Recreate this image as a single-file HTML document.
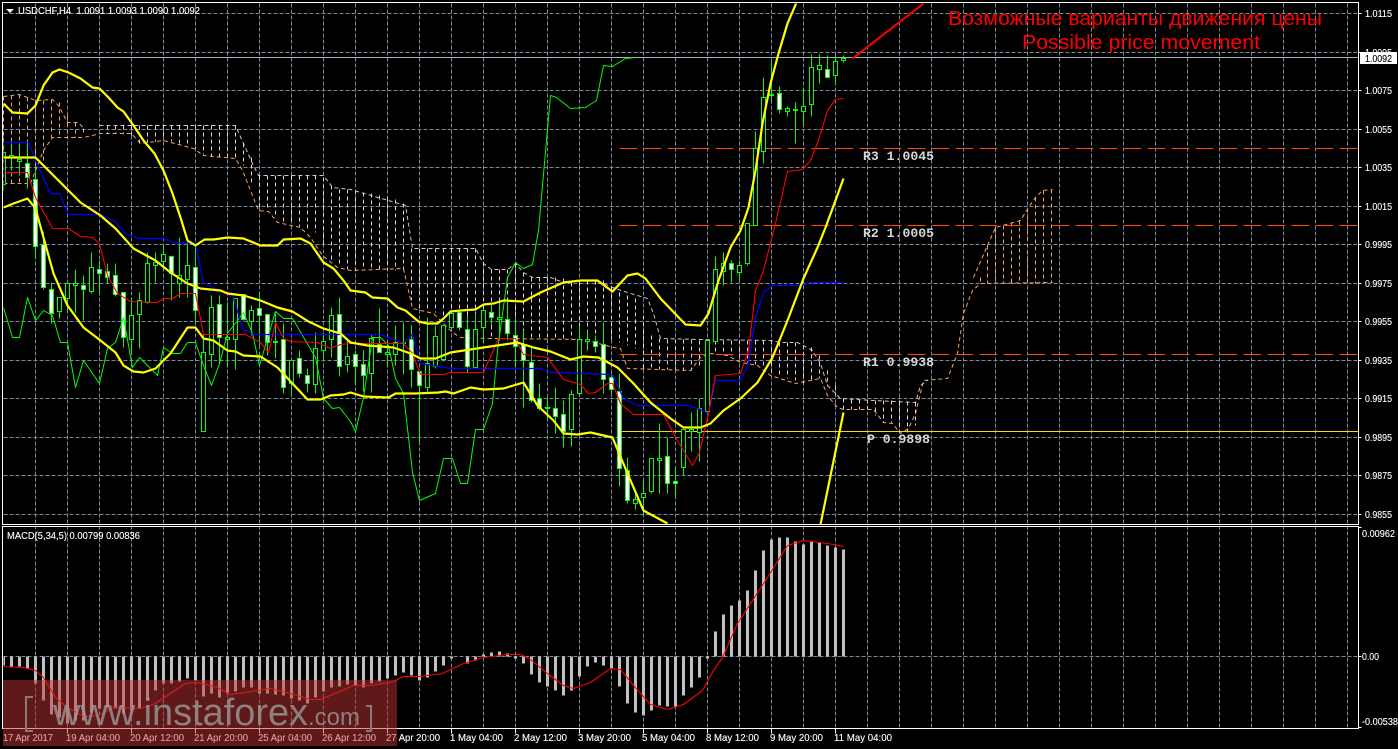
<!DOCTYPE html>
<html>
<head>
<meta charset="utf-8">
<style>
html,body{margin:0;padding:0;background:#000;width:1398px;height:749px;overflow:hidden}
svg{display:block}
text{font-family:"Liberation Sans","Noto Sans CJK SC",sans-serif;font-size:10.5px;fill:#fff;stroke:#fff;stroke-width:.12}
.m{font-family:"Liberation Mono",monospace;font-size:13px;font-weight:bold;fill:#d8d8d8;stroke:none}
.r{font-size:20px;fill:#f00;stroke:none}
.w{fill:#9a9a9a;stroke:none}
</style>
</head>
<body>
<svg width="1398" height="749" viewBox="0 0 1398 749" xmlns="http://www.w3.org/2000/svg">
<rect width="1398" height="749" fill="#000"/>
<defs><clipPath id="c"><rect x="3" y="3" width="1355" height="521"/></clipPath><clipPath id="d"><rect x="3" y="527" width="1355" height="201"/></clipPath></defs>
<g transform="translate(.5 .5)">
<!-- grid -->
<path shape-rendering="crispEdges" fill="none" stroke="#778899" stroke-width="1" stroke-dasharray="4 2" d="M35 3V728M67 3V728M99 3V728M131 3V728M163 3V728M195 3V728M227 3V728M259 3V728M291 3V728M323 3V728M355 3V728M387 3V728M419 3V728M451 3V728M483 3V728M515 3V728M547 3V728M579 3V728M611 3V728M643 3V728M675 3V728M707 3V728M739 3V728M771 3V728M803 3V728M835 3V728M867 3V728M899 3V728M931 3V728M963 3V728M995 3V728M1027 3V728M1059 3V728M1091 3V728M1123 3V728M1155 3V728M1187 3V728M1219 3V728M1251 3V728M1283 3V728M1315 3V728M1347 3V728"/>
<path shape-rendering="crispEdges" fill="none" stroke="#778899" stroke-width="1" stroke-dasharray="4 2" d="M3 13H1358M3 52H1358M3 90H1358M3 129H1358M3 167H1358M3 206H1358M3 244H1358M3 283H1358M3 321H1358M3 360H1358M3 398H1358M3 437H1358M3 475H1358M3 514H1358M3 656H1358"/>
<!-- current price -->
<path shape-rendering="crispEdges" stroke="#a9b2bb" d="M3 57H1358"/>
<!-- cloud -->
<g fill="none" stroke-width="1" stroke-dasharray="4 3" shape-rendering="crispEdges">
<path stroke="#f4a460" d="M3 96V183M11 95V183M19 94V183M27 97V183M35 100V178M43 100V160M51 99V137M59 102V137M67 115V137M75 122V137M83 128V135"/>
<path stroke="#f4a460" shape-rendering="auto" d="M3 96L19 94L27 97L35 100L52 99L58 105L67 122L78 122L83 128M3 183H27M30 183L43 150L52 137H83L100 133H131L140 143L163 140L193 148L203 155L235 158L242 170L258 210L268 211L277 222L300 227L310 237L322 255L337 267L350 270L403 268L412 308L433 313L452 332L460 337L493 338L583 339L613 347L620 348L627 368L690 370L700 357L710 353L727 355L740 362L757 365L770 375L795 383L820 378L827 395L837 407L843 409L873 409L883 422L892 423L900 433L908 428L915 413L923 380L947 378L957 353L963 313L972 290L980 283L1052 282"/>
<path stroke="#d8bfd8" shape-rendering="auto" d="M99 125H235L243 143L252 163L258 175H323L332 187L350 189L405 205L412 248H475L483 263L491 269H507L515 263L523 272L532 277H550L563 282L580 280H597L612 287L627 292L647 298L653 313L660 338L700 339L770 340L780 342H797L812 350L820 363L827 385L840 398L873 400L915 402L920 385L927 380"/>
<path stroke="#f4a460" shape-rendering="auto" d="M973 277L987 245L995 227L1020 220L1028 207L1035 197L1042 190L1052 189"/>
<path stroke="#e6d2c8" d="M107 125V133M115 125V133M123 125V133M131 125V135M139 125V143M147 125V142M155 125V141M163 125V140M171 125V141M179 125V144M187 125V147M195 125V148M203 125V154M211 125V156M219 125V157M227 125V157M235 125V158M243 143V165M251 157V183M259 175V208M267 175V210M275 175V216M283 175V221M291 175V224M299 175V226M307 175V228M315 175V232M323 177V245M331 185V261M339 189V266M347 189V269M355 190V270M363 192V270M371 193V270M379 195V270M387 197V270M395 199V270M403 203V269M411 248V300M419 248V310M427 248V312M435 248V312M443 248V316M451 248V325M459 248V332M467 248V336M475 248V337M483 255V338M491 269V338M499 269V338M507 269V338M515 263V338M523 272V338M531 277V338M539 277V338M547 277V339M555 277V339M563 278V339M571 282V339M579 281V339M587 280V339M595 280V339M603 280V339M611 287V339M619 292V342M627 295V345M635 298V348M643 315V368M651 335V369M659 338V369M667 339V369M675 339V369M683 339V370M691 339V370M699 340V365M707 340V354M715 340V353M723 340V354M731 340V355M739 340V357M747 340V362M755 340V364M763 340V366M771 340V373M779 342V376M787 342V378M795 342V380M803 345V383M811 347V380M819 355V378M827 370V385M835 385V395M843 398V409M851 399V409M859 399V409M867 399V409M875 400V415M883 400V422M891 400V422M899 401V431M907 401V432M915 402V425"/>
<path stroke="#f4a460" d="M980 277V283M987 245V283M995 227V283M1003 225V283M1011 222V283M1019 220V283M1027 208V283M1035 197V283M1043 190V282M1051 189V282"/>
</g>
<!-- pivots -->
<g shape-rendering="crispEdges" fill="none">
<path stroke="#ff4500" stroke-dasharray="18 6" d="M619 148H1358M619 354H1358M619 225H1358"/>
<path stroke="#ffd700" d="M619 431H1358"/>
</g>
<!-- candles -->
<g clip-path="url(#c)" shape-rendering="crispEdges">
<path fill="none" stroke="#00ff00" d="M3 135V190M11 143V170M19 143V175M27 143V188M35 165V258M43 231V289M51 282V323M59 297V318M67 283V312M75 269V312M83 275V320M91 252V293M99 260V293M107 263V283M115 263V296M123 292V347M131 297V352M139 292V348M147 252V303M155 252V282M163 245V270M171 255V300M179 237V297M187 237V297M195 242V322M203 333V431M211 295V367M219 295V363M227 302V367M235 298V369M243 294V320M251 305V335M259 293V345M267 314V355M275 311V358M283 323V393M291 360V395M299 350V377M307 368V392M315 332V393M323 332V360M331 307V357M339 297V376M347 340V372M355 350V384M363 350V391M371 334V392M379 308V352M387 341V367M395 325V365M403 322V374M411 325V387M419 371V443M427 317V392M435 325V368M443 325V361M451 312V327M459 310V330M467 315V373M475 313V368M483 308V343M491 305V325M499 300V340M507 300V340M515 320V367M523 330V407M531 345V402M539 383V410M547 397V420M555 387V433M563 400V447M571 390V446M579 325V393M587 330V350M595 335V352M603 322V393M611 372V393M619 373V486M627 457V503M635 492V509M643 480V515M651 458V493M659 423V493M667 437V493M675 468V497M683 429V475M691 412V451M699 398V461M707 340V411M715 256V342M723 252V285M731 260V282M739 260V280M747 223V265M755 131V225M763 77V163M771 61V102M779 86V113M787 106V116M795 102V143M803 87V125M811 54V116M819 54V83M827 55V77M835 55V85M843 55V62M544 407H550M401 342H405M273 341H277M793 109H797M769 94H773"/>
<path fill="#000" stroke="#00ff00" d="M1 152h4v32h-4zM9 155h4v2h-4zM17 159h4v2h-4zM57 297h4v14h-4zM65 283h4v15h-4zM73 283h4v2h-4zM89 267h4v24h-4zM129 315h4v24h-4zM137 300h4v14h-4zM145 263h4v39h-4zM153 262h4v3h-4zM161 254h4v7h-4zM177 275h4v8h-4zM185 265h4v14h-4zM201 352h4v79h-4zM209 307h4v47h-4zM225 337h4v2h-4zM233 298h4v41h-4zM249 310h4v11h-4zM273 341h4v1h-4zM289 360h4v23h-4zM313 348h4v36h-4zM321 341h4v9h-4zM329 315h4v24h-4zM345 356h4v8h-4zM369 338h4v35h-4zM385 352h4v2h-4zM393 342h4v12h-4zM401 342h4v1h-4zM425 363h4v24h-4zM433 336h4v30h-4zM441 325h4v34h-4zM449 313h4v14h-4zM473 329h4v38h-4zM481 310h4v17h-4zM497 317h4v2h-4zM545 407h4v1h-4zM569 394h4v35h-4zM577 339h4v54h-4zM585 339h4v2h-4zM633 499h4v4h-4zM641 493h4v4h-4zM649 458h4v33h-4zM657 458h4v2h-4zM681 429h4v38h-4zM689 429h4v2h-4zM697 408h4v24h-4zM705 340h4v71h-4zM713 269h4v72h-4zM721 263h4v8h-4zM737 265h4v7h-4zM745 223h4v40h-4zM753 148h4v77h-4zM761 97h4v54h-4zM769 94h4v1h-4zM785 108h4v3h-4zM793 109h4v1h-4zM801 106h4v5h-4zM809 67h4v37h-4zM817 65h4v4h-4zM833 61h4v14h-4zM841 58h4v2h-4z"/>
<path fill="#fff" stroke="#00ff00" d="M25 163h4v14h-4zM33 179h4v67h-4zM41 244h4v43h-4zM49 289h4v24h-4zM81 285h4v4h-4zM97 269h4v4h-4zM105 271h4v6h-4zM113 275h4v19h-4zM121 292h4v45h-4zM169 256h4v17h-4zM193 267h4v43h-4zM217 304h4v33h-4zM241 294h4v25h-4zM257 308h4v7h-4zM265 314h4v28h-4zM281 339h4v48h-4zM297 358h4v15h-4zM305 375h4v8h-4zM337 314h4v52h-4zM353 354h4v12h-4zM361 364h4v11h-4zM377 344h4v8h-4zM409 339h4v30h-4zM417 371h4v14h-4zM457 312h4v15h-4zM465 329h4v37h-4zM489 312h4v5h-4zM505 319h4v14h-4zM513 335h4v11h-4zM521 344h4v16h-4zM529 362h4v38h-4zM537 398h4v10h-4zM553 408h4v8h-4zM561 414h4v17h-4zM593 341h4v5h-4zM601 344h4v35h-4zM609 377h4v12h-4zM617 391h4v77h-4zM625 470h4v30h-4zM665 456h4v27h-4zM673 481h4v2h-4zM729 263h4v6h-4zM777 93h4v16h-4zM825 69h4v8h-4z"/>
</g>
<!-- indicators -->
<g clip-path="url(#c)" fill="none" stroke-linejoin="round">
<path stroke="#00ff00" stroke-width="1" d="M3 307L12 337L19 337L27 297L35 320L43 310L52 315L60 342L67 342L75 387L83 360L99 383L107 348L115 342L123 317L132 367L139 357L157 375L163 347L172 353L180 353L187 342L195 342L203 365L211 385L219 363L227 333L243 312L252 333L259 365L275 311L283 318L292 318L315 357L323 398L332 408L339 407L350 421L355 431L363 397L372 337L380 337L388 345L395 378L403 393L412 472L419 500L435 493L443 458L452 458L460 483L467 483L475 429L483 429L492 403L497 350L507 277L515 262L523 268L532 264L538 230L550 95L556 97L570 108L585 107L596 100L603 65L612 66L625 58L635 57"/>
<path stroke="#0000ff" stroke-width="1.2" d="M3 142L28 142L35 160L50 193L59 193L68 214L100 214L115 221L125 233L138 238L163 238L173 242L195 243L203 283L220 290L233 297L242 328L253 334L380 334L403 343L412 334L420 363L450 368L540 368L550 372L612 374L623 398L637 405L687 405L700 409L708 413L715 380L740 380L748 363L755 317L763 292L772 285L800 285L810 282L843 282"/>
<path stroke="#ff0000" stroke-width="1.1" d="M3 172L27 172L35 197L52 228L68 228L80 236L92 237L99 243L107 275L117 293L130 301L157 302L163 298L172 298L180 293L195 293L203 334L245 334L260 342L268 352L275 322L283 338L290 341L317 342L330 348L340 344L350 343L403 343L412 353L420 374L443 374L450 372L483 372L498 338L515 338L523 354L547 357L563 379L580 384L588 393L595 392L607 383L612 383L620 403L633 414L663 414L677 440L692 465L699 452L708 413L715 375L740 373L748 350L755 290L763 270L775 223L787 171L802 169L810 160L818 140L827 110L835 99L843 98"/>
<path stroke="#ffff00" stroke-width="2.2" d="M3 103L12 112L27 113L35 105L43 85L52 72L59 69L68 72L80 78L92 87L99 88L108 97L117 107L123 111L133 125L143 140L154 153L163 170L172 193L180 217L187 240L195 245L204 239L213 239L227 237L243 238L260 245L277 245L283 239L300 238L310 243L323 262L333 268L343 280L350 290L365 292L372 297L387 298L397 307L405 310L418 321L427 323L437 323L443 318L450 311L460 310L475 309L483 304L493 303L503 300L523 301L540 292L563 282L580 280L597 280L612 291L627 275L637 273L645 278L660 298L685 324L700 325L708 313L718 280L730 247L740 230L748 207L755 170L762 123L770 83L778 53L787 23L796 2"/>
<path stroke="#ffff00" stroke-width="2.2" d="M3 157L35 157L43 165L60 182L80 202L100 215L115 228L133 248L155 260L170 272L187 283L200 288L220 290L227 293L243 295L260 300L277 307L292 311L308 321L323 328L340 333L350 342L367 345L393 347L410 353L420 358L435 358L450 352L483 347L517 342L533 347L550 351L570 359L583 356L598 357L617 367L633 383L650 402L670 418L683 427L700 427L710 423L723 410L740 398L757 382L772 357L787 320L803 278L817 247L825 227L835 200L843 178"/>
<path stroke="#ffff00" stroke-width="2.2" d="M3 207L13 203L27 198L35 208L43 237L53 273L67 305L83 327L100 340L115 352L123 365L133 371L143 372L155 368L170 353L187 327L195 327L203 338L213 340L227 350L235 351L243 355L260 356L277 367L292 383L307 399L320 399L330 395L343 394L350 392L363 396L388 397L395 393L415 393L438 392L445 391L453 393L470 387L483 389L503 388L523 382L537 405L553 420L563 433L577 434L590 432L612 437L627 473L643 510L667 523"/>
<path stroke="#ffff00" stroke-width="2.2" d="M843 412L820 524"/>
<path stroke="#ff0000" stroke-width="2" d="M852 58L923 3"/>
</g>
<!-- MACD -->
<g clip-path="url(#d)">
<path shape-rendering="crispEdges" fill="none" stroke="#c0c0c0" stroke-width="3" d="M3 656V665M11 656V667M19 656V666M27 656V668M35 656V683M43 656V700M51 656V714M59 656V717M67 656V723M75 656V720M83 656V720M91 656V712M99 656V708M107 656V707M115 656V708M123 656V713M131 656V710M139 656V708M147 656V700M155 656V690M163 656V683M171 656V683M179 656V681M187 656V678M195 656V680M203 656V696M211 656V693M219 656V697M227 656V693M235 656V691M243 656V687M251 656V687M259 656V693M267 656V693M275 656V694M283 656V695M291 656V698M299 656V700M307 656V703M315 656V697M323 656V691M331 656V687M339 656V686M347 656V684M355 656V685M363 656V687M371 656V683M379 656V681M387 656V678M395 656V675M403 656V672M411 656V675M419 656V680M427 656V677M435 656V671M443 656V665M451 656V658M467 656V663M475 656V660M483 656V654M491 656V652M499 656V651M507 656V653M515 656V658M523 656V663M531 656V674M539 656V682M547 656V686M555 656V690M563 656V695M571 656V690M579 656V676M587 656V666M595 656V662M603 656V665M611 656V668M619 656V686M627 656V703M635 656V712M643 656V715M651 656V710M659 656V705M667 656V706M675 656V706M683 656V695M691 656V687M699 656V677M707 656V658M715 656V631M723 656V614M731 656V605M739 656V600M747 656V590M755 656V570M763 656V550M771 656V539M779 656V537M787 656V537M795 656V541M803 656V544M811 656V541M819 656V542M827 656V545M835 656V547M843 656V549"/>
<path fill="none" stroke="#ff0000" stroke-width="1.1" stroke-linejoin="round" d="M3 666L23 667L35 670L43 677L55 697L67 707L83 716L98 715L113 707L140 708L153 704L170 693L185 683L197 682L217 687L230 694L250 691L270 688L290 693L310 699L320 699L337 692L353 685L370 685L393 681L403 676L420 676L442 673L463 663L483 657L507 654L520 654L530 659L547 673L563 685L573 688L590 682L610 668L620 669L633 685L650 704L667 709L683 704L702 690L713 670L722 657L737 623L767 577L787 545L803 540L827 543L843 546"/>
</g>
<!-- frames -->
<g shape-rendering="crispEdges" fill="none" stroke="#fff">
<rect x="2" y="2" width="1356" height="522"/>
<rect x="2" y="526" width="1356" height="202"/>
<path d="M1358 13h3M1358 52h3M1358 90h3M1358 129h3M1358 167h3M1358 206h3M1358 244h3M1358 283h3M1358 321h3M1358 360h3M1358 398h3M1358 437h3M1358 475h3M1358 514h3M1358 527h3M1358 656h3M1358 727h3M67 728v5M131 728v5M195 728v5M259 728v5M323 728v5M387 728v5M451 728v5M515 728v5M579 728v5M643 728v5M707 728v5M771 728v5M835 728v5"/>
</g>
</g>
<!-- title -->
<path d="M6 9h8l-4 4z" fill="#fff"/>
<text x="18" y="14" textLength="182" lengthAdjust="spacingAndGlyphs" xml:space="preserve">USDCHF,H4  1.0091 1.0093 1.0090 1.0092</text>
<text x="7" y="539" textLength="133" lengthAdjust="spacingAndGlyphs">MACD(5,34,5) 0.00799 0.00836</text>
<!-- right axis -->
<g>
<text x="1365" y="17" textLength="27" lengthAdjust="spacingAndGlyphs">1.0115</text>
<text x="1365" y="56" textLength="27" lengthAdjust="spacingAndGlyphs">1.0095</text>
<text x="1365" y="94" textLength="27" lengthAdjust="spacingAndGlyphs">1.0075</text>
<text x="1365" y="133" textLength="27" lengthAdjust="spacingAndGlyphs">1.0055</text>
<text x="1365" y="171" textLength="27" lengthAdjust="spacingAndGlyphs">1.0035</text>
<text x="1365" y="210" textLength="27" lengthAdjust="spacingAndGlyphs">1.0015</text>
<text x="1365" y="248" textLength="27" lengthAdjust="spacingAndGlyphs">0.9995</text>
<text x="1365" y="287" textLength="27" lengthAdjust="spacingAndGlyphs">0.9975</text>
<text x="1365" y="325" textLength="27" lengthAdjust="spacingAndGlyphs">0.9955</text>
<text x="1365" y="364" textLength="27" lengthAdjust="spacingAndGlyphs">0.9935</text>
<text x="1365" y="402" textLength="27" lengthAdjust="spacingAndGlyphs">0.9915</text>
<text x="1365" y="441" textLength="27" lengthAdjust="spacingAndGlyphs">0.9895</text>
<text x="1365" y="479" textLength="27" lengthAdjust="spacingAndGlyphs">0.9875</text>
<text x="1365" y="518" textLength="27" lengthAdjust="spacingAndGlyphs">0.9855</text>
<text x="1362" y="537" textLength="33" lengthAdjust="spacingAndGlyphs">0.00962</text>
<text x="1362" y="660" textLength="17" lengthAdjust="spacingAndGlyphs">0.00</text>
<text x="1362" y="725" textLength="36" lengthAdjust="spacingAndGlyphs">-0.00538</text>
</g>
<rect x="1360" y="52" width="37" height="12" fill="#fff"/>
<text x="1365" y="62" textLength="27" lengthAdjust="spacingAndGlyphs" style="fill:#000;stroke:#000">1.0092</text>
<!-- red text -->
<text class="r" x="948" y="25" textLength="374" lengthAdjust="spacingAndGlyphs">Возможные варианты движения цены</text>
<text class="r" x="1022" y="49" textLength="238" lengthAdjust="spacingAndGlyphs">Possible price movement</text>
<!-- pivot labels -->
<text class="m" x="863" y="160" textLength="71" lengthAdjust="spacingAndGlyphs">R3 1.0045</text>
<text class="m" x="863" y="237" textLength="71" lengthAdjust="spacingAndGlyphs">R2 1.0005</text>
<text class="m" x="863" y="366" textLength="71" lengthAdjust="spacingAndGlyphs">R1 0.9938</text>
<text class="m" x="867" y="443" textLength="63" lengthAdjust="spacingAndGlyphs">P 0.9898</text>
<!-- time axis -->
<g>
<text x="3" y="741" textLength="50" lengthAdjust="spacingAndGlyphs">17 Apr 2017</text>
<text x="66" y="741" textLength="54" lengthAdjust="spacingAndGlyphs">19 Apr 04:00</text>
<text x="130" y="741" textLength="54" lengthAdjust="spacingAndGlyphs">20 Apr 12:00</text>
<text x="194" y="741" textLength="54" lengthAdjust="spacingAndGlyphs">21 Apr 20:00</text>
<text x="258" y="741" textLength="54" lengthAdjust="spacingAndGlyphs">25 Apr 04:00</text>
<text x="322" y="741" textLength="54" lengthAdjust="spacingAndGlyphs">26 Apr 12:00</text>
<text x="386" y="741" textLength="54" lengthAdjust="spacingAndGlyphs">27 Apr 20:00</text>
<text x="450" y="741" textLength="53" lengthAdjust="spacingAndGlyphs">1 May 04:00</text>
<text x="514" y="741" textLength="53" lengthAdjust="spacingAndGlyphs">2 May 12:00</text>
<text x="578" y="741" textLength="53" lengthAdjust="spacingAndGlyphs">3 May 20:00</text>
<text x="642" y="741" textLength="53" lengthAdjust="spacingAndGlyphs">5 May 04:00</text>
<text x="706" y="741" textLength="53" lengthAdjust="spacingAndGlyphs">8 May 12:00</text>
<text x="770" y="741" textLength="53" lengthAdjust="spacingAndGlyphs">9 May 20:00</text>
<text x="834" y="741" textLength="58" lengthAdjust="spacingAndGlyphs">11 May 04:00</text>
</g>
<!-- watermark -->
<rect x="3" y="680" width="394" height="66" fill="rgb(190,50,50)" fill-opacity=".5"/>
<path d="M33 697H26V731H33M366 706H371V731H366" fill="none" stroke="#8c7a7a" stroke-width="2"/>
<text class="w" x="53" y="725" textLength="255" lengthAdjust="spacingAndGlyphs" style="font-size:38px" fill-opacity=".8">www.instaforex</text>
<text class="w" x="308" y="725" textLength="52" lengthAdjust="spacingAndGlyphs" style="font-size:24px" fill-opacity=".8">.com</text>
</svg>
</body>
</html>
